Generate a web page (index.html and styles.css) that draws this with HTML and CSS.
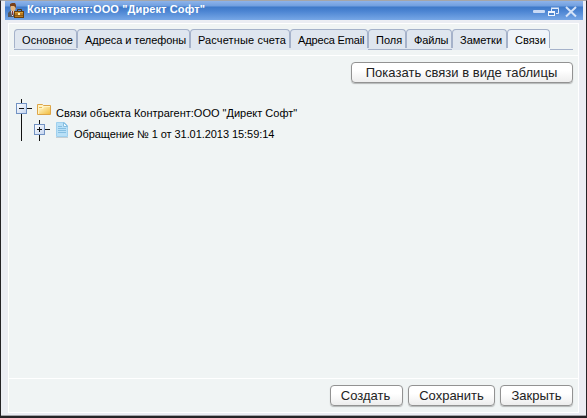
FILE: index.html
```html
<!DOCTYPE html>
<html lang="ru">
<head>
<meta charset="utf-8">
<title>Контрагент</title>
<link rel="stylesheet" href="styles.css">
</head>
<body>
<div class="window">
  <header class="titlebar">
    <svg class="app-icon" width="17" height="16" viewBox="0 0 17 16">
      <path d="M0 14V10L2 8H7L9 10V14Z" fill="#53565e"/>
      <path d="M3 8H6L5 13H4Z" fill="#e6e8ef"/>
      <path d="M4 8H5V12H4Z" fill="#8f3636"/>
      <rect x="2.5" y="1" width="5" height="7" rx="2" fill="#e5b77e"/>
      <path d="M2 4V1L4 0H7L8 2V5L6 3H3Z" fill="#774019"/>
      <path d="M9.500 8V6.500H13.500V8" fill="none" stroke="#4d3515"/>
      <rect x="6.500" y="8.500" width="9" height="6" fill="#b97a20" stroke="#68400f"/>
      <path d="M7 9.500H15" stroke="#dba33e"/>
      <path d="M7 12.500H15" stroke="#8f5c18"/>
      <rect x="10" y="10" width="2" height="2" fill="#fff0ae"/>
    </svg>
    <h1>Контрагент:ООО "Директ Софт"</h1>
    <svg class="controls" width="46" height="16" viewBox="0 0 46 16">
      <rect x="0" y="7" width="12" height="3" rx="1" fill="#c9daf5"/>
      <path d="M18.500 8V5.500H25.500V10.500H23M18 5H26" fill="none" stroke="#e4edfa"/>
      <rect x="15.500" y="8.500" width="6" height="4" fill="#4c84ce" stroke="#f1f6fd"/>
      <path d="M15 9H22" stroke="#f1f6fd" stroke-width="2"/>
      <path d="M33 4L43 13.500M43 4L33 13.500" stroke="#d5e3f8" stroke-width="2"/>
    </svg>
  </header>
  <main class="panel">
    <nav class="tabs">
      <a class="tab t-main lined">Основное</a>
      <a class="tab t-addr">Адреса и телефоны</a>
      <a class="tab t-acc">Расчетные счета</a>
      <a class="tab t-mail">Адреса Email</a>
      <a class="tab t-fields lined">Поля</a>
      <a class="tab t-files lined">Файлы</a>
      <a class="tab t-notes">Заметки</a>
      <a class="tab t-links active">Связи</a>
      <span class="tail"></span>
    </nav>
    <section class="content">
      <div class="toolbar"><button class="b-table">Показать связи в виде таблицы</button></div>
      <div class="tree">
        <div class="row root">
          <svg width="36" height="42" viewBox="0 0 36 42">
            <defs>
              <linearGradient id="box" x2="1" y2="1"><stop stop-color="#fff"/><stop offset="1" stop-color="#c3d3ee"/></linearGradient>
              <linearGradient id="fold" x2="1" y2="1"><stop stop-color="#fff8d0"/><stop offset="1" stop-color="#f2bd3f"/></linearGradient>
            </defs>
            <path d="M5.500 0V42M11 9.500H16" stroke="#111"/>
            <rect x=".5" y="4.500" width="10" height="10" fill="url(#box)" stroke="#7292c3"/>
            <path d="M3 9.500H8" stroke="#111"/>
            <path d="M21.500 15.500V5.500H26.500L27.500 6.500H34.500V15.500Z" fill="#fff3c4" stroke="#dda548"/>
            <path d="M23 15V10H27L28 8H34V15Z" fill="url(#fold)"/>
            <path d="M23 8.500H26" stroke="#eabb58"/>
          </svg>
          <span>Связи объекта Контрагент:ООО "Директ Софт"</span>
        </div>
        <div class="row child">
          <svg width="36" height="21" viewBox="0 0 36 21">
            <path d="M5.500 0V21M11 9.500H16" stroke="#111"/>
            <rect x=".5" y="4.500" width="10" height="10" fill="url(#box)" stroke="#7292c3"/>
            <path d="M3 9.500H8M5.500 7V12" stroke="#111"/>
            <path d="M22.500 2.500H30.500L33.500 5.500V16.500H22.500Z" fill="#b9e0f7" stroke="#9fd0ee"/>
            <path d="M29.500 2.500V6.500H33.500Z" fill="#effaff" stroke="#88bfe0"/>
            <path d="M24 6.500H28M24 8.500H32M24 10.500H32M24 12.500H32" stroke="#86bfe2"/>
            <path d="M22 17.500H34" stroke="#c6ced2"/>
          </svg>
          <span>Обращение № 1 от 31.01.2013 15:59:14</span>
        </div>
      </div>
    </section>
    <footer class="actions">
      <button class="b-create">Создать</button>
      <button class="b-save">Сохранить</button>
      <button class="b-close">Закрыть</button>
    </footer>
  </main>
</div>
</body>
</html>
```

FILE: styles.css
```css
* { box-sizing: border-box; }
body { margin: 0; font: 11px/13px "Liberation Sans", sans-serif; color: #000; }
.window {
  width: 587px; height: 418px; padding: 0 3px 0 4px;
  border: solid #252326; border-width: 1px 1px 2px; border-top-color: #a5a6a8;
  background: #ebedf3; box-shadow: inset 0 -1px #a3a5aa;
}
.titlebar {
  display: flex; align-items: flex-start; height: 19px; padding: 2px 4px 0 3px;
  background: linear-gradient(#8db3ea 0, #709fdf 5px, #3e79c8 6px, #4b84d2 10px, #77a7e6 19px);
}
.titlebar h1 { margin: 0 0 0 2px; font-size: 11px; line-height: 13px; letter-spacing: .12px; color: #fff; white-space: nowrap; }
.controls { margin-left: auto; }
.panel {
  display: flex; flex-direction: column; width: 571px; height: 390px; margin: 3px 0 0 3px;
  border: 1px solid #fff; background: #f0f4f4;
}
.tabs { display: flex; height: 31px; padding: 5px 5px 0 5px; flex: none; }
.tab {
  position: relative; height: 21px; padding: 5px 0 0 8px; white-space: nowrap;
  background: #dfe6ef; border-radius: 4px 4px 0 0;
}
.tab::before {
  content: ""; position: absolute; inset: 0 0 2px;
  border: solid #a5b2ca; border-width: 1px 1px 0; border-radius: 4px 4px 0 0;
}
.lined { border-bottom: 1px solid #a5b2ca; }
.lined::before { bottom: 1px; }
.active { background: #f0f4fa; }
.t-main { width: 63px; letter-spacing: .08px; }
.t-addr { width: 113px; letter-spacing: -.06px; }
.t-acc { width: 100px; letter-spacing: .13px; }
.t-mail { width: 78px; letter-spacing: -.15px; }
.t-fields { width: 38px; }
.t-files { width: 46px; letter-spacing: -.15px; }
.t-notes { width: 55px; }
.t-links { width: 43px; }
.tail { flex: 1; height: 21px; border-bottom: 1px solid #a5b2ca; }
.content { flex: 1; border-top: 1px solid #fff; }
.toolbar { display: flex; justify-content: flex-end; padding: 6px 5px 0 0; }
button {
  height: 21px; padding: 0; border: 1px solid #929292; border-radius: 4px;
  background: linear-gradient(#fff 40%, #ededed); box-shadow: 0 1px 1px #b4b7b7;
  font: 13px/19px "Liberation Sans", sans-serif; color: #222; white-space: nowrap;
}
.b-table { width: 222px; padding-right: 1px; letter-spacing: .03px; }
.tree { padding: 16px 0 0 7px; }
.row { display: flex; height: 21px; }
.row span { margin: 8px 0 0 4px; white-space: nowrap; }
.child { padding-left: 18px; }
.child span { letter-spacing: -.06px; }
.actions { display: flex; justify-content: flex-end; gap: 5px; height: 34px; padding: 6px 5px 0 0; border-top: 1px solid #fff; }
.b-create { width: 73px; padding-right: 2px; }
.b-save { width: 87px; }
.b-close { width: 73px; }
```
